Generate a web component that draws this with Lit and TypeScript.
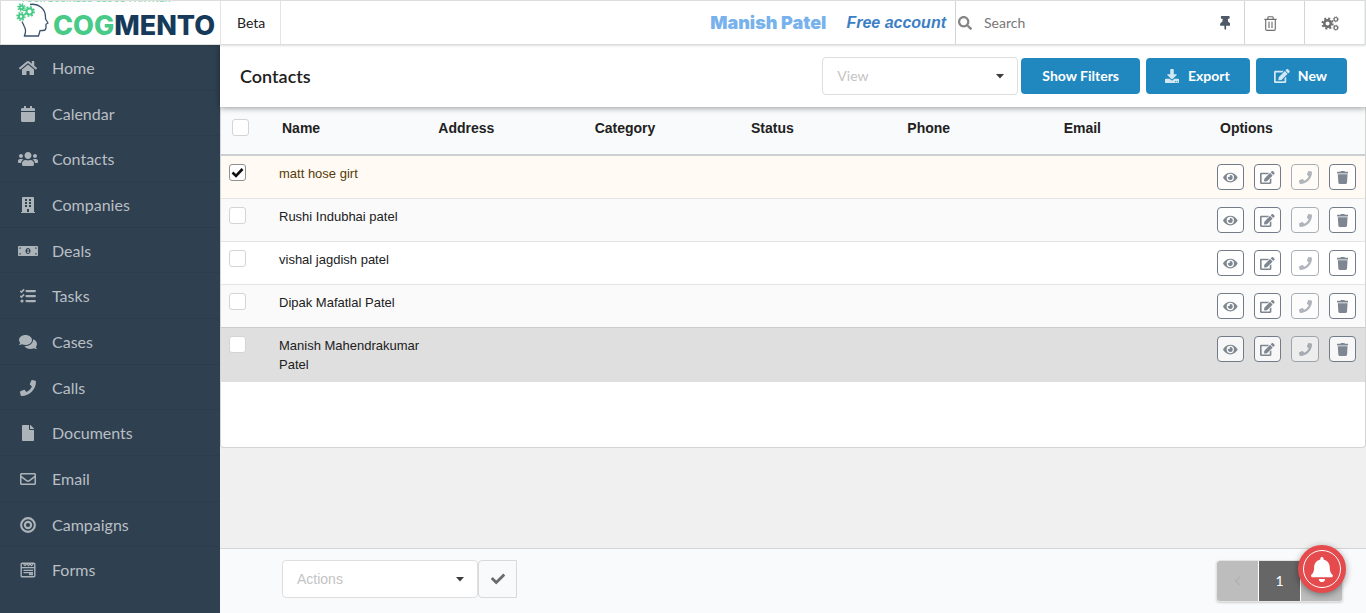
import { LitElement, html, svg, css, nothing } from "lit";
import { customElement, property, state } from "lit/decorators.js";

interface Glyph {
  box: string;
  body: unknown;
}

const solid = (box: string, d: string): Glyph => ({
  box,
  body: svg`<path fill="currentColor" fill-rule="evenodd" d=${d}></path>`,
});

const glyphs: Record<string, Glyph> = {
  home: solid("0 0 576 512", "M280.37 148.26L96 300.11V464a16 16 0 0 0 16 16l112.06-.29a16 16 0 0 0 15.92-16V368a16 16 0 0 1 16-16h64a16 16 0 0 1 16 16v95.64a16 16 0 0 0 16 16.05L464 480a16 16 0 0 0 16-16V300L295.67 148.26a12.19 12.19 0 0 0-15.3 0zM571.6 251.47L488 182.56V44.05a12 12 0 0 0-12-12h-56a12 12 0 0 0-12 12v72.61L318.47 43a48 48 0 0 0-61 0L4.34 251.47a12 12 0 0 0-1.6 16.9l25.5 31A12 12 0 0 0 45.15 301l235.22-193.74a12.19 12.19 0 0 1 15.3 0L530.9 301a12 12 0 0 0 16.9-1.6l25.5-31a12 12 0 0 0-1.7-16.93z"),
  calendar: solid("0 0 448 512", "M12 192h424c6.6 0 12 5.4 12 12v260c0 26.5-21.5 48-48 48H48c-26.5 0-48-21.5-48-48V204c0-6.6 5.4-12 12-12zm436-44v-36c0-26.5-21.5-48-48-48h-48V12c0-6.6-5.4-12-12-12h-40c-6.6 0-12 5.4-12 12v52H160V12c0-6.6-5.4-12-12-12h-40c-6.6 0-12 5.4-12 12v52H48C21.5 64 0 85.5 0 112v36c0 6.6 5.4 12 12 12h424c6.6 0 12-5.4 12-12z"),
  users: solid("0 0 640 512", "M96 224c35.3 0 64-28.7 64-64s-28.7-64-64-64-64 28.7-64 64 28.7 64 64 64zm448 0c35.3 0 64-28.7 64-64s-28.7-64-64-64-64 28.7-64 64 28.7 64 64 64zm32 32h-64c-17.6 0-33.5 7.1-45.1 18.6 40.3 22.1 68.9 62 75.1 109.4h66c17.7 0 32-14.3 32-32v-32c0-35.3-28.7-64-64-64zm-256 0c61.9 0 112-50.1 112-112S381.9 32 320 32 208 82.1 208 144s50.1 112 112 112zm76.8 32h-8.3c-20.8 10-43.9 16-68.5 16s-47.6-6-68.5-16h-8.3C179.6 288 128 339.6 128 403.2V432c0 26.5 21.5 48 48 48h288c26.5 0 48-21.5 48-48v-28.8c0-63.6-51.6-115.2-115.2-115.2zm-223.7-13.4C161.5 263.1 145.6 256 128 256H64c-35.3 0-64 28.7-64 64v32c0 17.7 14.3 32 32 32h65.9c6.3-47.4 34.9-87.3 75.2-109.4z"),
  building: solid("0 0 448 512", "M436 480h-20V24c0-13.3-10.7-24-24-24H56C42.7 0 32 10.7 32 24v456H12c-6.6 0-12 5.4-12 12v20h448v-20c0-6.6-5.4-12-12-12zM128 64h64v64h-64zM256 64h64v64h-64zM128 160h64v64h-64zM256 160h64v64h-64zM128 256h64v64h-64zM256 256h64v64h-64zM192 384h64v96h-64z"),
  money: solid("0 0 640 512", "M608 96H32c-17.7 0-32 14.3-32 32v256c0 17.7 14.3 32 32 32h576c17.7 0 32-14.3 32-32V128c0-17.7-14.3-32-32-32zM48 368v-48c26.5 0 48 21.5 48 48zM48 192v-48h48c0 26.5-21.5 48-48 48zM320 352c-44.2 0-80-43-80-96s35.8-96 80-96 80 43 80 96-35.8 96-80 96zM592 368h-48c0-26.5 21.5-48 48-48zM592 192c-26.5 0-48-21.5-48-48h48zM298 208l28-16h16v104h18v24h-72v-24h20v-68h-18z"),
  tasks: {
    box: "0 0 512 512",
    body: svg`<g fill="none" stroke="currentColor" stroke-width="52"><path d="M8 92l40 40 84-88M8 252l40 40 84-88"></path><path stroke-width="72" stroke-linecap="round" d="M208 96h268M208 256h268M208 416h268"></path></g><circle cx="64" cy="416" r="50" fill="currentColor"></circle>`,
  },
  comments: solid("0 0 576 512", "M416 192c0-88.4-93.1-160-208-160S0 103.6 0 192c0 34.3 14.1 65.9 38 92-13.4 30.2-35.5 54.2-35.8 54.5-2.2 2.3-2.8 5.7-1.5 8.7S4.8 352 8 352c36.6 0 66.9-12.3 88.7-25 32.2 15.7 70.3 25 111.3 25 114.9 0 208-71.6 208-160zm122 220c23.9-26 38-57.7 38-92 0-66.9-53.5-124.2-129.3-148.1.9 6.6 1.3 13.3 1.3 20.1 0 105.9-107.7 192-240 192-10.8 0-21.3-.8-31.7-1.9C207.8 439.6 281.8 480 368 480c41 0 79.1-9.2 111.3-25 21.8 12.7 52.1 25 88.7 25 3.2 0 6.1-1.9 7.3-4.8 1.3-2.9.7-6.3-1.5-8.7-.3-.3-22.4-24.2-35.8-54.5z"),
  phone: solid("0 0 512 512", "M493.4 24.6l-104-24c-11.3-2.6-22.9 3.3-27.5 13.9l-48 112c-4.2 9.8-1.4 21.3 6.9 28l60.6 49.6c-36 76.7-98.9 140.5-177.2 177.2l-49.6-60.6c-6.8-8.3-18.2-11.1-28-6.9l-112 48C3.9 366.5-2 378.1.6 389.4l24 104C27.1 504.2 36.7 512 48 512c256.1 0 464-207.5 464-464 0-11.2-7.7-20.9-18.6-23.4z"),
  file: solid("0 0 384 512", "M224 136V0H24C10.7 0 0 10.7 0 24v464c0 13.3 10.7 24 24 24h336c13.3 0 24-10.7 24-24V160H248c-13.2 0-24-10.8-24-24zm160-14.1v6.1H256V0h6.1c6.4 0 12.5 2.5 17 7l97.9 98c4.5 4.5 7 10.6 7 16.9z"),
  envelope: solid("0 0 512 512", "M464 64H48C21.49 64 0 85.49 0 112v288c0 26.51 21.49 48 48 48h416c26.51 0 48-21.49 48-48V112c0-26.51-21.49-48-48-48zm0 48v40.805c-22.422 18.259-58.168 46.651-134.587 106.49-16.841 13.247-50.201 45.072-73.413 44.701-23.208.375-56.579-31.459-73.413-44.701C106.18 199.465 70.425 171.067 48 152.805V112h416zM48 400V214.398c22.914 18.251 55.409 43.862 104.938 82.646 21.857 17.205 60.134 55.186 103.062 54.955 42.717.231 80.509-37.199 103.053-54.947 49.528-38.783 82.032-64.401 104.947-82.653V400H48z"),
  target: {
    box: "0 0 512 512",
    body: svg`<g fill="none" stroke="currentColor" stroke-width="68"><circle cx="256" cy="256" r="220"></circle><circle cx="256" cy="256" r="100"></circle></g>`,
  },
  form: {
    box: "0 0 16 16",
    body: svg`<g fill="none" stroke="currentColor"><rect x="1.2" y="1.2" width="13.6" height="13.6" rx="1" stroke-width="1.4"></rect><path stroke-width="1.2" d="M3.5 2l1.5 1.6L6.5 2M7 2l1.5 1.6L10 2M10 2l1.5 1.6L13 2M1.5 5.6h13M3.5 8.3h9.5M3.5 10.6h9.5"></path></g><path fill="currentColor" d="M9 11.2h4v2H9z"></path>`,
  },
  edit: solid("0 0 576 512", "M402.6 83.2l90.2 90.2c3.8 3.8 3.8 10 0 13.8L274.4 405.6l-92.8 10.3c-12.4 1.4-22.9-9.1-21.5-21.5l10.3-92.8L388.8 83.2c3.8-3.8 10-3.8 13.8 0zm162-22.9l-48.8-48.8c-15.2-15.2-39.9-15.2-55.2 0l-35.4 35.4c-3.8 3.8-3.8 10 0 13.8l90.2 90.2c3.8 3.8 10 3.8 13.8 0l35.4-35.4c15.2-15.3 15.2-40 0-55.2zM384 346.2V448H64V128h229.8c3.2 0 6.2-1.3 8.5-3.5l40-40c7.6-7.6 2.2-20.5-8.5-20.5H48C21.5 64 0 85.5 0 112v352c0 26.5 21.5 48 48 48h352c26.5 0 48-21.5 48-48V306.2c0-10.7-12.9-16-20.5-8.5l-40 40c-2.2 2.3-3.5 5.3-3.5 8.5z"),
  eye: solid("0 0 576 512", "M572.52 241.4C518.29 135.59 410.93 64 288 64S57.68 135.64 3.48 241.41a32.35 32.35 0 0 0 0 29.19C57.71 376.41 165.07 448 288 448s230.32-71.64 284.52-177.41a32.35 32.35 0 0 0 0-29.19zM288 400a144 144 0 1 1 144-144 143.93 143.93 0 0 1-144 144zm0-240a95.31 95.31 0 0 0-25.31 3.79 47.85 47.85 0 0 1-66.9 66.9A95.78 95.78 0 1 0 288 160z"),
  trash: solid("0 0 448 512", "M432 32H312l-9.4-18.7A24 24 0 0 0 281.1 0H166.8a23.72 23.72 0 0 0-21.4 13.3L136 32H16A16 16 0 0 0 0 48v32a16 16 0 0 0 16 16h416a16 16 0 0 0 16-16V48a16 16 0 0 0-16-16zM53.2 467a48 48 0 0 0 47.9 45h245.8a48 48 0 0 0 47.9-45L416 128H32z"),
  bin: {
    box: "0 0 16 16",
    body: svg`<g fill="none" stroke="currentColor" stroke-width="1.2"><path d="M1.5 3.6h13M5.2 3.4V1.6q0-.8.8-.8h4q.8 0 .8.8v1.8M2.9 3.8v10.2q0 1.3 1.3 1.3h7.6q1.3 0 1.3-1.3V3.8M6.4 6.2v6.6M9.6 6.2v6.6"></path></g>`,
  },
  search: solid("0 0 512 512", "M505 442.7L405.3 343c-4.5-4.5-10.6-7-17-7H372c27.6-35.3 44-79.7 44-128C416 93.1 322.9 0 208 0S0 93.1 0 208s93.1 208 208 208c48.3 0 92.7-16.4 128-44v16.3c0 6.4 2.5 12.5 7 17l99.7 99.7c9.4 9.4 24.6 9.4 33.9 0l28.3-28.3c9.4-9.4 9.4-24.6.1-34zM208 336c-70.7 0-128-57.2-128-128 0-70.7 57.2-128 128-128 70.7 0 128 57.2 128 128 0 70.7-57.2 128-128 128z"),
  pin: solid("0 0 384 512", "M298.028 214.267L285.793 96H328c13.255 0 24-10.745 24-24V24c0-13.255-10.745-24-24-24H56C42.745 0 32 10.745 32 24v48c0 13.255 10.745 24 24 24h42.207L85.972 214.267C37.465 236.82 0 277.261 0 328c0 13.255 10.745 24 24 24h136v104.007c0 1.242.289 2.467.845 3.578l24 48c2.941 5.882 11.364 5.893 14.311 0l24-48a8.008 8.008 0 0 0 .845-3.578V352h136c13.255 0 24-10.745 24-24-.001-51.183-37.983-91.42-85.973-113.733z"),
  cogs: {
    box: "0 0 20 16",
    body: svg`<g fill="none" stroke="currentColor"><circle cx="7" cy="8" r="3.5" stroke-width="2.6"></circle><circle cx="7" cy="8" r="5.5" stroke-width="2" stroke-dasharray="2.2 2.12"></circle><circle cx="15.8" cy="3.5" r="1.9" stroke-width="1.3"></circle><circle cx="15.8" cy="3.5" r="2.8" stroke-width=".8" stroke-dasharray="1.1 1.1"></circle><circle cx="15.8" cy="12.5" r="1.9" stroke-width="1.3"></circle><circle cx="15.8" cy="12.5" r="2.8" stroke-width=".8" stroke-dasharray="1.1 1.1"></circle></g>`,
  },
  download: solid("0 0 512 512", "M216 0h80c13.3 0 24 10.7 24 24v168h87.7c17.8 0 26.7 21.5 14.1 34.1L269.7 378.3c-7.5 7.5-19.8 7.5-27.3 0L90.1 226.1C77.5 213.5 86.4 192 104.2 192H192V24c0-13.3 10.7-24 24-24zM512 376v112c0 13.3-10.7 24-24 24H24c-13.3 0-24-10.7-24-24V376c0-13.3 10.7-24 24-24h146.7l49 49c20.1 20.1 52.5 20.1 72.6 0l49-49H488c13.3 0 24 10.7 24 24zM368 444h40v40h-40zM432 444h40v40h-40z"),
  check: solid("0 0 512 512", "M173.898 439.404l-166.4-166.4c-9.997-9.997-9.997-26.206 0-36.204l36.203-36.204c9.997-9.998 26.207-9.998 36.204 0L192 312.69 432.095 72.596c9.997-9.997 26.207-9.997 36.204 0l36.203 36.204c9.997 9.997 9.997 26.206 0 36.204l-294.4 294.401c-9.998 9.997-26.207 9.997-36.204-.001z"),
  bell: solid("0 0 448 512", "M224 512c35.32 0 63.97-28.65 63.97-64H160.03c0 35.35 28.65 64 63.97 64zm215.39-149.71c-19.32-20.76-55.47-51.99-55.47-154.29 0-77.7-54.48-139.9-127.94-155.16V32c0-17.67-14.32-32-31.98-32s-31.98 14.33-31.98 32v20.84C118.56 68.1 64.08 130.3 64.08 208c0 102.3-36.15 133.53-55.47 154.29-6 6.45-8.66 14.16-8.61 21.71.11 16.4 12.98 32 32.1 32h383.8c19.12 0 32-15.6 32.1-32 .05-7.55-2.61-15.27-8.61-21.71z"),
  caret: solid("0 0 8 5", "M0 0h8L4 4.5z"),
  left: { box: "0 0 8 12", body: svg`<path fill="none" stroke="currentColor" stroke-width="2" d="M7 1L2 6l5 5"></path>` },
  right: { box: "0 0 8 12", body: svg`<path fill="none" stroke="currentColor" stroke-width="2" d="M1 1l5 5-5 5"></path>` },
};

@customElement("crm-icon")
class CrmIcon extends LitElement {
  @property() name = "";

  static styles = css`
    :host {
      display: inline-flex;
      flex: none;
      justify-content: center;
      align-items: center;
      width: 16px;
      height: 16px;
    }
    .glyph {
      display: block;
      height: 100%;
      flex: none;
    }
  `;

  render() {
    const glyph = glyphs[this.name];
    if (!glyph) return nothing;
    return html`<svg class="glyph" viewBox=${glyph.box} aria-hidden="true">${glyph.body}</svg>`;
  }
}

@customElement("crm-logo")
class CrmLogo extends LitElement {
  static styles = css`
    :host {
      display: block;
      height: 100%;
    }
    .art {
      display: block;
    }
    .word {
      font: 800 27px Inter, sans-serif;
    }
    .tagline {
      font: 600 9px Inter, sans-serif;
    }
  `;

  render() {
    const gear = (x: number, y: number, r: number) => svg`
      <circle cx=${x} cy=${y} r=${r} stroke-width="2"></circle>
      <circle cx=${x} cy=${y} r=${r + 1.6} stroke-width="1.8" stroke-dasharray=${`${((r + 1.6) * Math.PI) / 8} ${((r + 1.6) * Math.PI) / 8}`}></circle>`;
    return html`<svg class="art" width="216" height="43" viewBox="0 0 216 43" role="img" aria-label="Cogmento">
      <text class="tagline" x="19" y="1" fill="#8fdcb5">YOUR BUSINESS CLOUD PARTNER</text>
      <path fill="none" stroke="#3a536d" stroke-width="1.3" stroke-linejoin="round" d="M29 3.500C38 2 44.500 8 44.500 16v2l2.500 4-2 1.200v3.300q0 3-3 3l-3 .2-1.500 5.300H23.300q2.500-5 0-9.500L21 20.500"></path>
      <g fill="none" stroke="#48cb87">${gear(28.5, 10.5, 3)}${gear(20.5, 6.5, 1.8)}${gear(20, 15.5, 2.2)}</g>
      <text class="word" x="52" y="34" fill="#48cb87">COG<tspan fill="#163a5a">MENTO</tspan></text>
    </svg>`;
  }
}

@customElement("app-root")
class AppRoot extends LitElement {
  @state() private people = [
    { name: "matt hose girt", checked: true },
    { name: "Rushi Indubhai patel", checked: false },
    { name: "vishal jagdish patel", checked: false },
    { name: "Dipak Mafatlal Patel", checked: false },
    { name: "Manish Mahendrakumar Patel", checked: false, hovered: true },
  ];

  private links = [
    ["home", "Home"],
    ["calendar", "Calendar"],
    ["users", "Contacts"],
    ["building", "Companies"],
    ["money", "Deals"],
    ["tasks", "Tasks"],
    ["comments", "Cases"],
    ["phone", "Calls"],
    ["file", "Documents"],
    ["envelope", "Email"],
    ["target", "Campaigns"],
    ["form", "Forms"],
  ];

  private columns = ["Name", "Address", "Category", "Status", "Phone", "Email", "Options"];

  static styles = css`
    :host {
      display: flex;
      flex-direction: column;
      min-height: 100vh;
      position: relative;
      background: #f0f0f0;
      color: #212121;
      font: 14px/20px Lato, sans-serif;
    }
    * {
      box-sizing: border-box;
    }
    button,
    input,
    select {
      font: inherit;
      color: inherit;
      margin: 0;
    }
    button {
      cursor: pointer;
    }
    .topbar {
      display: flex;
      height: 45px;
      flex: none;
      background: #fff;
      border: 1px solid #dcdddd;
      box-shadow: 0 1px 2px rgba(34, 36, 38, 0.15);
      position: relative;
      z-index: 2;
    }
    .brand {
      width: 220px;
      flex: none;
      border-right: 1px solid #e4e4e4;
      overflow: hidden;
    }
    .beta {
      display: flex;
      align-items: center;
      padding: 0 15px 0 16px;
      border-right: 1px solid #e4e4e4;
    }
    .account {
      display: flex;
      align-items: center;
      justify-content: flex-end;
      flex: 1;
      gap: 20px;
      padding: 0 9px;
      border-right: 1px solid #d4d4d5;
      font-family: "Liberation Sans", Arial, sans-serif;
      font-size: 16px;
    }
    .user {
      color: #78b2ec;
      font-family: "Arial Black", Inter, sans-serif;
      font-size: 18px;
      font-weight: 900;
    }
    .plan {
      color: #3d7fc4;
      font-weight: bold;
      font-style: italic;
    }
    .search {
      display: flex;
      align-items: center;
      flex: none;
      width: 289px;
      padding: 0 11px 0 1px;
      gap: 11px;
      color: #858585;
      border-right: 1px solid #d4d4d5;
    }
    .search crm-icon {
      height: 14px;
    }
    .search .pin {
      color: #4d5966;
    }
    .query {
      flex: 1;
      min-width: 0;
      border: 0;
      padding: 0;
      outline: 0;
      background: none;
    }
    .query::placeholder {
      color: #777;
      opacity: 1;
    }
    .tool {
      display: flex;
      align-items: center;
      width: 60px;
      padding: 2px 0 0 16px;
      border: 0;
      border-right: 1px solid #d4d4d5;
      background: none;
      color: #6d6d6d;
    }
    .tool:last-child {
      border-right: 1px solid #eee;
    }
    .tool crm-icon {
      width: 18px;
      height: 15px;
    }
    .body {
      display: flex;
      flex: 1;
    }
    .sidebar {
      display: flex;
      flex-direction: column;
      width: 220px;
      flex: none;
      padding-bottom: 20px;
      background: #2f4050;
    }
    .link {
      display: flex;
      align-items: center;
      flex: 1;
      gap: 14px;
      padding: 1px 18px 0;
      border-bottom: 1px solid #2c3c4b;
      color: #b9bfc4;
      font-size: 16px;
      text-decoration: none;
    }
    .link:last-child {
      border-bottom-color: transparent;
    }
    .link crm-icon {
      width: 20px;
      color: #acb3b9;
    }
    .content {
      display: flex;
      flex-direction: column;
      flex: 1;
      min-width: 0;
    }
    .toolbar {
      display: flex;
      align-items: center;
      gap: 3px;
      height: 62px;
      padding: 0 19px 0 20px;
      background: #fff;
      box-shadow: 0 1px 6px rgba(0, 0, 0, 0.4);
      position: relative;
      z-index: 1;
    }
    .title {
      flex: 1;
      margin: 0;
      font-size: 18px;
      font-weight: 600;
    }
    .commands {
      display: flex;
      gap: 6px;
    }
    .picker {
      display: grid;
      align-items: center;
      width: 196px;
      height: 38px;
    }
    .picker > * {
      grid-area: 1 / 1;
    }
    .picker select {
      width: 100%;
      height: 100%;
      padding: 0 14px;
      border: 1px solid #dededf;
      border-radius: 4px;
      appearance: none;
      background: #fff;
      color: #c4c4c4;
    }
    .picker crm-icon {
      justify-self: end;
      width: 8px;
      height: 5px;
      margin-right: 14px;
      color: #3c3c3c;
      pointer-events: none;
    }
    .primary {
      display: flex;
      align-items: center;
      gap: 8px;
      height: 36px;
      padding: 0 21px;
      border: 0;
      border-radius: 4px;
      background: #2088bf;
      color: #fff;
      font-weight: 700;
    }
    .primary.pictured {
      padding: 0 20px 0 18px;
    }
    .primary crm-icon {
      height: 14px;
      color: #d2e7f2;
    }
    .card {
      background: #fff;
      border: 1px solid #d4d4d5;
      border-top: 0;
      border-radius: 0 0 4px 4px;
      padding-bottom: 65px;
    }
    .grid {
      width: 100%;
      table-layout: fixed;
      border-collapse: separate;
      border-spacing: 0;
      font: 13px/19px "Liberation Sans", Arial, sans-serif;
    }
    .pick {
      width: 47px;
    }
    .options {
      width: 159px;
    }
    th {
      padding: 12px 14px 15px;
      height: 49px;
      background: #f9fafb;
      border-bottom: 2px solid #cdd0d2;
      text-align: left;
      vertical-align: top;
      font-size: 14px;
    }
    th.pick {
      padding: 12px 11px;
    }
    td {
      padding: 8px 3px 8px 11px;
      vertical-align: top;
      border-bottom: 1px solid #e3e4e4;
    }
    td.pick {
      padding: 8px;
    }
    tbody tr:nth-child(even) td {
      background: #fafafa;
    }
    tbody tr.chosen td {
      background: #fffaf3;
      color: #573a08;
    }
    tbody tr:has(+ .hovered) td {
      border-bottom-color: #cbcbcb;
    }
    tbody tr.hovered td {
      background: #dfdfdf;
      border-bottom: 0;
    }
    .tick {
      display: block;
      width: 17px;
      height: 17px;
      border: 1px solid #d4d4d5;
      border-radius: 3px;
      appearance: none;
      background: #fff;
    }
    .tick:checked {
      border-color: #8f9091;
      background: #fff
        url("data:image/svg+xml,%3Csvg xmlns='http://www.w3.org/2000/svg' viewBox='0 0 15 15'%3E%3Cpath d='M2.5 7.5l3.5 3.5 6.5-7' fill='none' stroke='%23111' stroke-width='2.6'/%3E%3C/svg%3E")
        center / 15px 15px no-repeat;
    }
    .actions {
      display: flex;
      gap: 10px;
    }
    .act {
      display: flex;
      align-items: center;
      justify-content: center;
      width: 27px;
      height: 26px;
      padding: 0;
      border: 1px solid #727c88;
      border-radius: 4px;
      background: rgba(255, 255, 255, 0.75);
      color: #7e8791;
    }
    .act:disabled {
      width: 28px;
      opacity: 0.6;
    }
    .act crm-icon {
      width: 15px;
      height: 13px;
    }
    .footer {
      display: flex;
      align-items: flex-start;
      height: 65px;
      margin-top: auto;
      padding: 11px 23px 0 62px;
      background: #f9fafb;
      border-top: 1px solid #d4d4d5;
    }
    .footer .picker select {
      font-family: "Liberation Sans", Arial, sans-serif;
    }
    .apply {
      display: flex;
      align-items: center;
      justify-content: center;
      width: 39px;
      height: 38px;
      border: 1px solid #d8d9da;
      border-radius: 4px 0 0 4px;
      background: #f9fafb;
      color: #6b6b6b;
    }
    .apply crm-icon {
      height: 14px;
    }
    .pages {
      display: flex;
      gap: 1px;
      margin-left: auto;
      border: 1px solid #e4e4e4;
      border-radius: 4px;
      background: #fff;
      overflow: hidden;
      box-shadow: 0 1px 2px rgba(34, 36, 38, 0.2);
    }
    .page {
      display: flex;
      align-items: center;
      justify-content: center;
      width: 41px;
      height: 40px;
      padding: 0;
      border: 0;
      background: #bdbdbd;
      color: #b3b3b3;
    }
    .page crm-icon {
      height: 10px;
    }
    .page.current {
      background: #666;
      color: #fff;
    }
    .alerts {
      position: absolute;
      right: 20px;
      bottom: 20px;
      z-index: 3;
      display: flex;
      align-items: center;
      justify-content: center;
      width: 48px;
      height: 48px;
      padding: 0;
      border: 5px solid #e54b4d;
      border-radius: 50%;
      background: #e54b4d;
      color: #fff;
      box-shadow: 0 2px 7px rgba(0, 0, 0, 0.4);
    }
    .ring {
      display: flex;
      align-items: center;
      justify-content: center;
      width: 38px;
      height: 38px;
      flex: none;
      border: 1px solid #fff;
      border-radius: 50%;
    }
    .ring crm-icon {
      width: 25px;
      height: 25px;
    }
  `;

  private toggle(index: number) {
    this.people = this.people.map((p, i) => (i === index ? { ...p, checked: !p.checked } : p));
  }

  render() {
    return html`
      <header class="topbar">
        <div class="brand"><crm-logo></crm-logo></div>
        <span class="beta">Beta</span>
        <div class="account">
          <span class="user">Manish Patel</span>
          <span class="plan">Free account</span>
        </div>
        <div class="search">
          <crm-icon name="search"></crm-icon>
          <input class="query" type="text" placeholder="Search" aria-label="Search" />
          <crm-icon class="pin" name="pin"></crm-icon>
        </div>
        <button class="tool" aria-label="Deleted items"><crm-icon name="bin"></crm-icon></button>
        <button class="tool" aria-label="Settings"><crm-icon name="cogs"></crm-icon></button>
      </header>
      <div class="body">
        <nav class="sidebar">
          ${this.links.map(
            ([icon, label]) => html`<a class="link" href="#"><crm-icon name=${icon}></crm-icon><span>${label}</span></a>`
          )}
        </nav>
        <main class="content">
          <div class="toolbar">
            <h1 class="title">Contacts</h1>
            <label class="picker">
              <select aria-label="View"><option>View</option></select>
              <crm-icon name="caret"></crm-icon>
            </label>
            <div class="commands">
              <button class="primary">Show Filters</button>
              <button class="primary pictured"><crm-icon name="download"></crm-icon>Export</button>
              <button class="primary pictured"><crm-icon name="edit"></crm-icon>New</button>
            </div>
          </div>
          <div class="card">
            <table class="grid">
              <thead>
                <tr>
                  <th class="pick"><input class="tick" type="checkbox" aria-label="Select all" /></th>
                  ${this.columns.map((c) => html`<th class=${c === "Options" ? "options" : ""}>${c}</th>`)}
                </tr>
              </thead>
              <tbody>
                ${this.people.map(
                  (p, i) => html`<tr class=${p.checked ? "chosen" : p.hovered ? "hovered" : ""}>
                    <td class="pick">
                      <input class="tick" type="checkbox" aria-label=${p.name} .checked=${p.checked} @change=${() => this.toggle(i)} />
                    </td>
                    <td>${p.name}</td>
                    <td></td>
                    <td></td>
                    <td></td>
                    <td></td>
                    <td></td>
                    <td>
                      <div class="actions">
                        <button class="act" aria-label="View"><crm-icon name="eye"></crm-icon></button>
                        <button class="act" aria-label="Edit"><crm-icon name="edit"></crm-icon></button>
                        <button class="act" aria-label="Call" disabled><crm-icon name="phone"></crm-icon></button>
                        <button class="act" aria-label="Delete"><crm-icon name="trash"></crm-icon></button>
                      </div>
                    </td>
                  </tr>`
                )}
              </tbody>
            </table>
          </div>
          <footer class="footer">
            <label class="picker">
              <select aria-label="Actions"><option>Actions</option></select>
              <crm-icon name="caret"></crm-icon>
            </label>
            <button class="apply" aria-label="Apply"><crm-icon name="check"></crm-icon></button>
            <div class="pages">
              <button class="page" aria-label="Previous page"><crm-icon name="left"></crm-icon></button>
              <button class="page current">1</button>
              <button class="page" aria-label="Next page"><crm-icon name="right"></crm-icon></button>
            </div>
          </footer>
        </main>
      </div>
      <button class="alerts" aria-label="Notifications">
        <span class="ring"><crm-icon name="bell"></crm-icon></span>
      </button>
    `;
  }
}
